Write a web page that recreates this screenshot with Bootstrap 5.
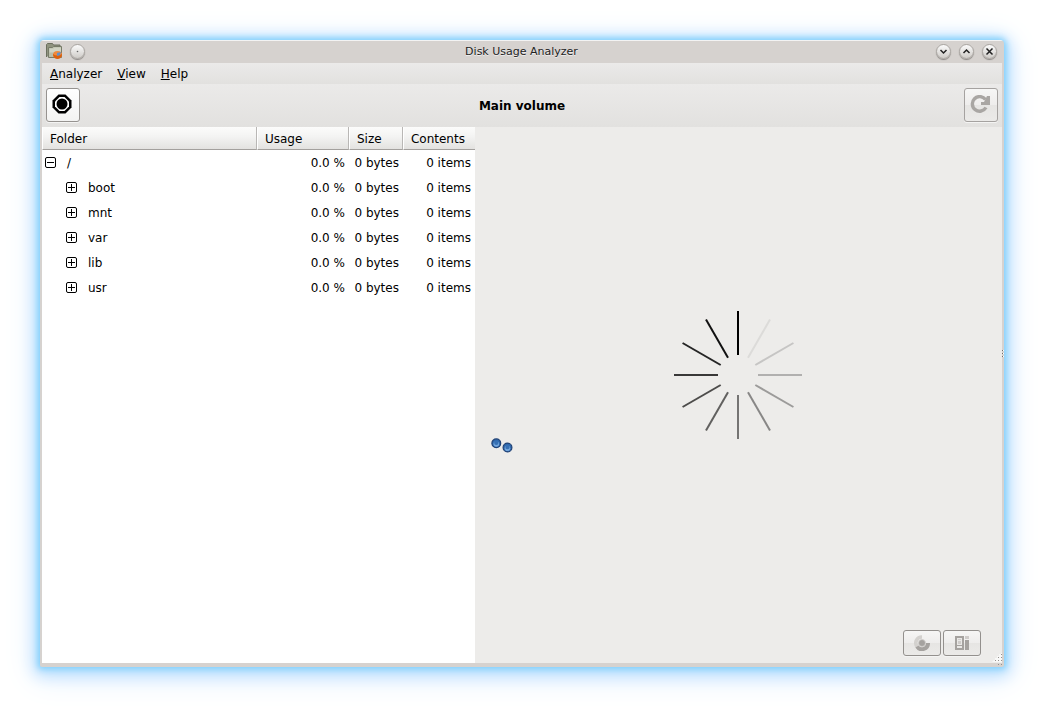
<!DOCTYPE html>
<html lang="en">
<head>
<meta charset="utf-8">
<meta name="viewport" content="width=device-width, initial-scale=1">
<title>Disk Usage Analyzer</title>
<link href="https://cdn.jsdelivr.net/npm/bootstrap@5.3.0/dist/css/bootstrap.min.css" rel="stylesheet">
<style>
  body { background: #fff; color: #000; font-family: "DejaVu Sans", sans-serif; font-size: 12px; line-height: 16px; padding: 40px; }
  svg { display: block; }
  .app-window {
    min-height: calc(100vh - 80px); background: #edecea;
    border: 2px solid #d6d2cf; border-top: 1px solid #f3f3f3; border-bottom: 4px solid #d6d2cf;
    border-radius: 4px 4px 2px 2px;
    box-shadow: 0 0 6px 2px #7fd0fc, 0 3px 16px 5px #b4dcfd, 0 5px 32px 6px #e2efff;
  }
  .title-bar { height: 22px; background: #d6d2cf; padding: 0 5px 2px 4px; }
  .title-bar h1 { font-size: 11px; line-height: 16px; color: #222; text-shadow: 0 1px #eee; padding-top: 2px; }
  .round-btn {
    width: 15px; height: 15px; padding: 0; border: 1px solid #aaa6a2; border-radius: 50%;
    background: linear-gradient(#fbfbfb, #cfccc8); box-shadow: 0 1px 1px #8b8784; color: #222;
  }
  .menu-bar { height: 21px; background: linear-gradient(#ebeae9, #e2e1df); padding: 0 8px; gap: 15px; }
  .menu-bar a { color: #000; text-decoration: none; }
  .tool-bar { height: 43px; background: linear-gradient(#ebeae9, #e2e1df); padding: 0 4px 1px; }
  .tool-bar h2 { font-size: 12px; line-height: 16px; padding-top: 2px; }
  .tool-btn {
    display: flex; align-items: center; justify-content: center; padding: 0;
    width: 34px; height: 34px; border: 1px solid #969390; border-radius: 3px;
    background: linear-gradient(#fff, #f3f3f2); box-shadow: 0 1px #f4f4f3;
  }
  .tool-btn:disabled { background: linear-gradient(#f6f6f5, #eeedec 50%, #e6e5e3 50%, #ebeae8); border-color: #a5a2a0; }
  .view-btn { width: 38px; height: 26px; }
  .view-btn:disabled { border-color: #93908d; }
  .tree-pane { width: 45.1%; background: #fff; }
  .tree { table-layout: fixed; width: 100%; border-collapse: separate; border-spacing: 0; }
  .tree th {
    height: 23px; padding: 2px 0 0 7px; font-weight: 400; background: linear-gradient(#fcfcfb, #f3f3f2 45%, #e3e2e0);
    border-bottom: 1px solid #a3a09d; border-right: 1px solid #b9b7b5; border-left: 1px solid #fff;
  }
  .tree th:last-child { border-right: 0; }
  .tree td { height: 25px; padding: 0 4px; text-align: right; white-space: nowrap; }
  .tree td:first-child { padding: 0 3px; text-align: left; }
  .tree td:first-child > div { gap: 11px; }
  .tree .child-row { padding-left: 21px; }
  .toggle { display: block; padding: 0; border: 0; background: none; }
  .col-usage { width: 92px; } .col-size { width: 54px; } .col-items { width: 72px; }
  .drag-dots { left: 16px; top: calc(50% + 63px); }
  .edge-dots { right: -2px; top: calc(50% - 3px); }
  .view-bar { height: 40px; padding: 0 21px 0 0; gap: 2px; }
  .grip { right: -1px; bottom: -3px; }
</style>
</head>
<body>
<main class="app-window position-relative d-flex flex-column">
  <header class="title-bar d-flex align-items-center">
    <div class="d-flex align-items-center flex-fill w-50 gap-2">
      <svg width="16" height="16" viewBox="0 0 16 16" aria-hidden="true">
        <path d="M.5 14V1.500l1-1h5L7.500 2H14v4" fill="#8f937f" stroke="#6b6f5e"/>
        <path d="M2.500 4.500h4l1-1h8v11h-13z" fill="#b9bda9" stroke="#777b68"/>
        <path d="M3.500 5.500h4l1-1H15v5H3.500z" fill="#d0d3c3"/>
        <ellipse cx="11.500" cy="11.500" rx="4.500" ry="3.500" fill="#f08a3c"/>
        <path d="M7 11q4 3 9 0v1q-1 4-4.500 4T7 12z" fill="#d9600f"/>
        <path d="M11 10l4-1-1 3-3 1z" fill="#5f91cb"/>
      </svg>
      <button class="round-btn" type="button" aria-label="Window options">
        <svg width="13" height="13" viewBox="0 0 13 13"><circle cx="6.500" cy="6.500" r=".8" fill="#666"/></svg>
      </button>
    </div>
    <h1 class="m-0 text-nowrap">Disk Usage Analyzer</h1>
    <div class="d-flex align-items-center justify-content-end gap-2 flex-fill w-50">
      <button class="round-btn" type="button" aria-label="Minimize"><svg width="13" height="13" viewBox="0 0 13 13"><path d="M3.500 5l3 3 3-3" fill="none" stroke="currentColor" stroke-width="1.500"/></svg></button>
      <button class="round-btn" type="button" aria-label="Maximize"><svg width="13" height="13" viewBox="0 0 13 13"><path d="M3.500 8l3-3 3 3" fill="none" stroke="currentColor" stroke-width="1.500"/></svg></button>
      <button class="round-btn" type="button" aria-label="Close"><svg width="13" height="13" viewBox="0 0 13 13"><path d="M3.500 3.500l6 6m0-6l-6 6" fill="none" stroke="currentColor" stroke-width="1.500"/></svg></button>
    </div>
  </header>

  <nav class="menu-bar d-flex align-items-center" aria-label="Main menu">
    <a href="#"><u>A</u>nalyzer</a>
    <a href="#"><u>V</u>iew</a>
    <a href="#"><u>H</u>elp</a>
  </nav>

  <div class="tool-bar d-flex align-items-center justify-content-between">
    <button class="tool-btn" type="button" aria-label="Stop scan">
      <svg width="22" height="22" viewBox="0 0 22 22">
        <path d="M6.500.500h7l6 6v7l-6 6h-7l-6-6v-7z"/>
        <path d="M7.500 3h5L17 7.500v5L12.500 17h-5L3 12.500v-5z" fill="#fff"/>
        <circle cx="10" cy="10" r="5.500"/>
      </svg>
    </button>
    <h2 class="m-0 fw-bold">Main volume</h2>
    <button class="tool-btn" type="button" aria-label="Refresh" disabled>
      <svg width="22" height="20" viewBox="0 0 22 20">
        <path d="M15.500 4.500A7.300 7.300 0 1 0 16 12.500" fill="none" stroke="#a9a6a3" stroke-width="3.400"/>
        <path d="M17 1h3v9h-9V7h3z" fill="#a9a6a3"/>
      </svg>
    </button>
  </div>

  <div class="d-flex flex-grow-1">
    <section class="tree-pane flex-shrink-0">
      <table class="tree">
        <colgroup><col><col class="col-usage"><col class="col-size"><col class="col-items"></colgroup>
        <thead><tr><th scope="col">Folder</th><th scope="col">Usage</th><th scope="col">Size</th><th scope="col">Contents</th></tr></thead>
        <tbody>
          <tr><td><div class="d-flex align-items-center"><button class="toggle" type="button" aria-label="Collapse /"><svg width="11" height="11"><use href="#minus"/></svg></button>/</div></td><td>0.0 %</td><td>0 bytes</td><td>0 items</td></tr>
          <tr><td><div class="child-row d-flex align-items-center"><button class="toggle" type="button" aria-label="Expand boot"><svg width="11" height="11"><use href="#plus"/></svg></button>boot</div></td><td>0.0 %</td><td>0 bytes</td><td>0 items</td></tr>
          <tr><td><div class="child-row d-flex align-items-center"><button class="toggle" type="button" aria-label="Expand mnt"><svg width="11" height="11"><use href="#plus"/></svg></button>mnt</div></td><td>0.0 %</td><td>0 bytes</td><td>0 items</td></tr>
          <tr><td><div class="child-row d-flex align-items-center"><button class="toggle" type="button" aria-label="Expand var"><svg width="11" height="11"><use href="#plus"/></svg></button>var</div></td><td>0.0 %</td><td>0 bytes</td><td>0 items</td></tr>
          <tr><td><div class="child-row d-flex align-items-center"><button class="toggle" type="button" aria-label="Expand lib"><svg width="11" height="11"><use href="#plus"/></svg></button>lib</div></td><td>0.0 %</td><td>0 bytes</td><td>0 items</td></tr>
          <tr><td><div class="child-row d-flex align-items-center"><button class="toggle" type="button" aria-label="Expand usr"><svg width="11" height="11"><use href="#plus"/></svg></button>usr</div></td><td>0.0 %</td><td>0 bytes</td><td>0 items</td></tr>
        </tbody>
      </table>
    </section>

    <section class="d-flex flex-column flex-grow-1">
      <div class="position-relative d-flex flex-grow-1 align-items-center justify-content-center">
        <svg width="128" height="128" viewBox="-64 -64 128 128" stroke-width="2" role="img" aria-label="Scanning">
          <path d="M0-20V-64" stroke="#000"/>
          <path d="M0-20V-64" stroke="#dcdbd9" transform="rotate(30)"/>
          <path d="M0-20V-64" stroke="#c6c5c4" transform="rotate(60)"/>
          <path d="M0-20V-64" stroke="#b1b0af" transform="rotate(90)"/>
          <path d="M0-20V-64" stroke="#9c9b9a" transform="rotate(120)"/>
          <path d="M0-20V-64" stroke="#888786" transform="rotate(150)"/>
          <path d="M0-20V-64" stroke="#757473" transform="rotate(180)"/>
          <path d="M0-20V-64" stroke="#61605f" transform="rotate(210)"/>
          <path d="M0-20V-64" stroke="#4d4c4b" transform="rotate(240)"/>
          <path d="M0-20V-64" stroke="#393838" transform="rotate(270)"/>
          <path d="M0-20V-64" stroke="#252525" transform="rotate(300)"/>
          <path d="M0-20V-64" stroke="#111" transform="rotate(330)"/>
        </svg>
        <svg class="drag-dots position-absolute" width="22" height="15" viewBox="0 0 22 15" aria-hidden="true">
          <g stroke="#1f4175" stroke-width="1.200" fill="#2f69ae"><circle cx="5.300" cy="5.300" r="4.400"/><circle cx="16.500" cy="9.500" r="4.400"/></g>
          <g fill="#76a8de"><circle cx="5.300" cy="6" r="2.800"/><circle cx="16.500" cy="10.200" r="2.800"/></g>
          <g fill="#3670b4"><circle cx="5.300" cy="4.800" r="2.200"/><circle cx="16.500" cy="9" r="2.200"/></g>
        </svg>
      </div>
      <div class="view-bar d-flex align-items-center justify-content-end">
        <button class="tool-btn view-btn" type="button" aria-label="Rings chart" disabled>
          <svg width="16" height="16" viewBox="0 0 16 16">
            <path d="M8 2A6 6 0 0 0 3 11.500" fill="none" stroke="#d3d1ce" stroke-width="3.600"/>
            <path d="M14 8A6 6 0 0 1 3 11.500" fill="none" stroke="#a5a29f" stroke-width="4"/>
            <circle cx="8" cy="8" r="3.500" fill="#a5a29f" stroke="#d3d1ce" stroke-width=".8"/>
          </svg>
        </button>
        <button class="tool-btn view-btn" type="button" aria-label="Treemap chart" disabled>
          <svg width="14" height="14" viewBox="0 0 14 14">
            <path d="M1 1h7v12H1z" fill="#e9e8e6" stroke="#a5a29f" stroke-width="2"/>
            <path d="M3 3h3v1H3zM3 5h3v3H3z" fill="#cfccca"/><path d="M1 9h7v1H1zM10 4h4v10h-4z" fill="#a5a29f"/>
            <path d="M10 0h4v3h-4z" fill="#cfccca"/>
          </svg>
        </button>
      </div>
    </section>
  </div>

  <svg class="edge-dots position-absolute" width="2" height="8" viewBox="0 0 2 8" aria-hidden="true">
    <path d="M0 1h1v1H0zM0 4h1v1H0zM0 7h1v1H0z" fill="#706d6a"/>
    <path d="M1 1h1v1H1zM1 4h1v1H1zM1 7h1v1H1z" fill="#fff"/>
  </svg>
  <svg class="grip position-absolute" width="11" height="13" viewBox="0 0 11 13" aria-hidden="true">
    <path d="M10 0v9H0l2-2h1V5h2V3h2V1h2V0z" fill="#f8f8f7"/>
    <path d="M9 1h1v1H9zM6 4h1v1H6zM9 4h1v1H9zM3 7h1v1H3zM6 7h1v1H6zM9 7h1v1H9zM6 11h1v1H6zM9 11h1v1H9z" fill="#95918e"/>
  </svg>
</main>

<svg width="0" height="0" class="position-absolute" aria-hidden="true">
  <symbol id="minus" viewBox="0 0 11 11"><rect x=".5" y=".5" width="10" height="10" rx="1.500" fill="#fff" stroke="#000"/><path d="M2 5.500h7" stroke="#000"/></symbol>
  <symbol id="plus" viewBox="0 0 11 11"><rect x=".5" y=".5" width="10" height="10" rx="1.500" fill="#fff" stroke="#000"/><path d="M2 5.500h7M5.500 2v7" stroke="#000"/></symbol>
</svg>
<script src="https://cdn.jsdelivr.net/npm/bootstrap@5.3.0/dist/js/bootstrap.bundle.min.js"></script>
</body>
</html>
